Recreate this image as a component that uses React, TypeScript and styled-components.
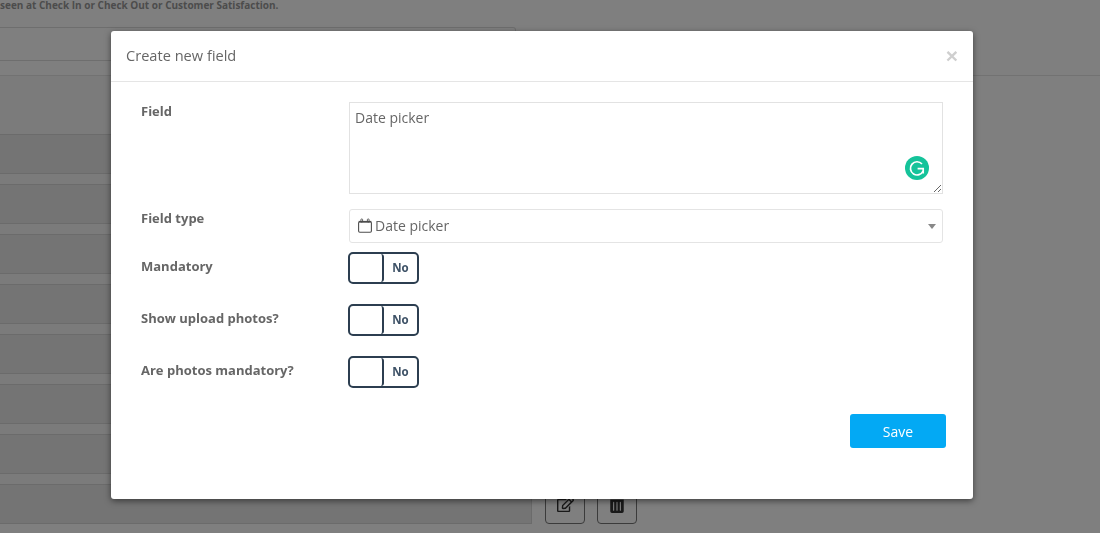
import React from 'react';
import styled, { createGlobalStyle } from 'styled-components';
import { FaRegEdit, FaTrashAlt } from 'react-icons/fa';

const GlobalStyle = createGlobalStyle`
  html, body {
    margin: 0;
    height: 100%;
    overflow: hidden;
    background: #fff;
    font-family: "Open Sans", "Liberation Sans", sans-serif;
  }
`;

const TOGGLES = ['Mandatory', 'Show upload photos?', 'Are photos mandatory?'];
const ROWS = [0, 1, 2, 3, 4, 5, 6, 7];

const CalendarIcon = () => (
  <svg width="14" height="15" viewBox="0 0 14 15" fill="none" stroke="#4d4d4d">
    <path d="M.6 4.2V13a1.2 1.2 0 0 0 1.2 1.2h10.4a1.2 1.2 0 0 0 1.2-1.2V4.2" strokeWidth="1.1" />
    <path d="M.6 3.8h12.8" strokeWidth="1.8" />
    <rect x="2.9" y="1" width="1.7" height="3" rx=".6" strokeWidth=".9" />
    <rect x="9.4" y="1" width="1.7" height="3" rx=".6" strokeWidth=".9" />
  </svg>
);

const GrammarlyIcon = () => (
  <svg width="24" height="24" viewBox="0 0 24 24" fill="none">
    <circle cx="12" cy="12" r="12" fill="#15c39a" />
    <path d="M17 8a6.6 6.6 0 1 0 1.1 7" stroke="#fff" strokeWidth="1.7" />
    <path d="M12.6 12.6h5.6v5" stroke="#fff" strokeWidth="1.7" />
  </svg>
);

const App = () => (
  <Page>
    <GlobalStyle />
    <Notice>seen at Check In or Check Out or Customer Satisfaction.</Notice>
    <TopField />
    <TopDivider />
    <FieldList>
      {ROWS.map((row) => (
        <FieldRow key={row}>
          <FieldBar />
          <ActionButton><FaRegEdit size={17} /></ActionButton>
          <ActionButton><FaTrashAlt size={18} /></ActionButton>
        </FieldRow>
      ))}
    </FieldList>

    <Backdrop>
      <Modal>
        <ModalHeader>
          <ModalTitle>Create new field</ModalTitle>
          <CloseButton>×</CloseButton>
        </ModalHeader>
        <ModalBody>
          <FormRow $gap={15}>
            <Label>Field</Label>
            <TextareaWrap>
              <FieldTextarea readOnly defaultValue="Date picker" />
              <GrammarlyBadge><GrammarlyIcon /></GrammarlyBadge>
            </TextareaWrap>
          </FormRow>
          <FormRow $gap={9}>
            <Label>Field type</Label>
            <SelectBox>
              <CalendarIcon />
              <span>Date picker</span>
              <Caret />
            </SelectBox>
          </FormRow>
          {TOGGLES.map((label) => (
            <FormRow key={label} $gap={20}>
              <ToggleLabel>{label}</ToggleLabel>
              <Toggle>
                <ToggleHandle />
                <ToggleText>No</ToggleText>
              </Toggle>
            </FormRow>
          ))}
          <ModalFooter>
            <SaveButton>Save</SaveButton>
          </ModalFooter>
        </ModalBody>
      </Modal>
    </Backdrop>
  </Page>
);

export default App;

const Page = styled.div`
  position: relative;
  height: 533px;
  overflow: hidden;
  background: #fff;
`;

const Notice = styled.div`
  height: 27px;
  font-size: 10px;
  line-height: 11px;
  font-weight: 700;
  color: #999;
  white-space: nowrap;
`;

const TopField = styled.div`
  width: 515px;
  height: 32px;
  border: 1px solid #ddd;
  border-left: 0;
  border-radius: 0 3px 3px 0;
`;

const TopDivider = styled.div`
  height: 14px;
  border-bottom: 1px solid #e4e4e4;
`;

const FieldList = styled.div`
  display: flex;
  flex-direction: column;
  padding-top: 58px;
  row-gap: 10px;
  background: linear-gradient(to right, #f6f6f6 531px, #fff 531px);
`;

const FieldRow = styled.div`
  display: flex;
  column-gap: 12px;
  height: 40px;
`;

const FieldBar = styled.div`
  box-sizing: border-box;
  width: 532px;
  margin-right: 1px;
  background: #e9e9e9;
  border: 1px solid #d6d6d6;
  border-left: 0;
`;

const ActionButton = styled.div`
  box-sizing: border-box;
  display: flex;
  align-items: center;
  justify-content: center;
  width: 40px;
  height: 40px;
  border: 1px solid #777;
  border-radius: 4px;
  background: #fff;
  color: #333;
`;

const Backdrop = styled.div`
  position: absolute;
  inset: 0;
  display: flex;
  align-items: flex-start;
  padding: 31px 127px 0 111px;
  background: rgba(0, 0, 0, 0.5);
`;

const Modal = styled.div`
  box-sizing: border-box;
  width: 862px;
  height: 468px;
  background: #fff;
  border-radius: 3px;
  box-shadow: 0 2px 6px rgba(0, 0, 0, 0.5);
  will-change: transform;
`;

const ModalHeader = styled.div`
  box-sizing: border-box;
  display: flex;
  align-items: center;
  justify-content: space-between;
  height: 51px;
  padding: 0 15px 2px;
  border-bottom: 1px solid #e5e5e5;
`;

const ModalTitle = styled.div`
  font-size: 14.6px;
  color: #666;
`;

const CloseButton = styled.div`
  font-family: "Liberation Sans", sans-serif;
  font-size: 21px;
  line-height: 1;
  font-weight: 700;
  color: #cfcfcf;
`;

const ModalBody = styled.div`
  padding: 20px 30px 0;
`;

const FormRow = styled.div<{ $gap: number }>`
  display: flex;
  margin-bottom: ${(p) => p.$gap}px;
`;

const Label = styled.div`
  flex: 0 0 208px;
  font-size: 13px;
  line-height: 18px;
  font-weight: 700;
  color: #666;
`;

const ToggleLabel = styled(Label)`
  padding-top: 5px;
`;

const TextareaWrap = styled.div`
  position: relative;
  width: 594px;
  height: 92px;
`;

const FieldTextarea = styled.textarea`
  box-sizing: border-box;
  display: block;
  width: 100%;
  height: 100%;
  padding: 6px 5px;
  border: 1px solid #e2e2e2;
  border-radius: 0;
  outline: none;
  font-family: inherit;
  font-size: 14px;
  line-height: 18px;
  color: #666;
`;

const GrammarlyBadge = styled.div`
  position: absolute;
  right: 14px;
  bottom: 14px;
  width: 24px;
  height: 24px;
`;

const SelectBox = styled.div`
  box-sizing: border-box;
  display: flex;
  align-items: center;
  column-gap: 3px;
  width: 594px;
  height: 34px;
  padding: 0 8px 2px;
  border: 1px solid #e4e4e4;
  border-radius: 3px;
  font-size: 14px;
  color: #666;
`;

const Caret = styled.i`
  width: 0;
  height: 0;
  margin: 2px -2px 0 auto;
  border-left: 4px solid transparent;
  border-right: 4px solid transparent;
  border-top: 5px solid #888;
`;

const Toggle = styled.div`
  box-sizing: border-box;
  display: flex;
  width: 71px;
  height: 32px;
  margin-left: -1px;
  border: 2px solid #2c3e50;
  border-radius: 5px;
`;

const ToggleHandle = styled.div`
  box-sizing: border-box;
  width: 34px;
  border-right: 2px solid #2c3e50;
  border-radius: 0 3px 3px 0;
`;

const ToggleText = styled.div`
  flex: 1;
  font-size: 11.5px;
  line-height: 28px;
  font-weight: 700;
  text-align: center;
  color: #3d5166;
`;

const ModalFooter = styled.div`
  display: flex;
  justify-content: flex-end;
  margin-top: 26px;
  margin-right: -3px;
`;

const SaveButton = styled.button`
  width: 96px;
  height: 34px;
  padding: 0;
  border: 0;
  border-radius: 3px;
  background: #03a9f4;
  font-family: inherit;
  font-size: 14px;
  font-weight: 500;
  color: #fff;
`;
